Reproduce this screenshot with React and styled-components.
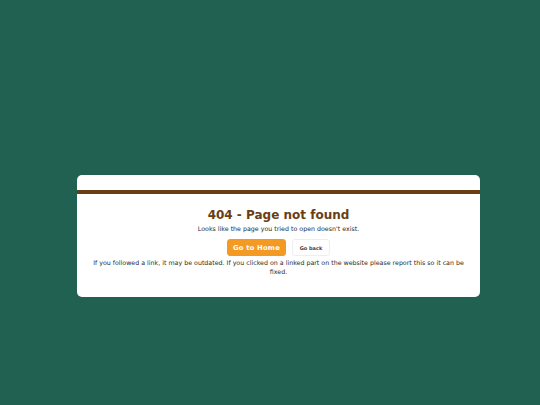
import React from 'react'
import styled, { createGlobalStyle } from 'styled-components'

const GlobalStyle = createGlobalStyle`
  html, body {
    margin: 0;
    padding: 0;
    background: #216152;
    font-family: "DejaVu Sans", Verdana, sans-serif;
  }
`

const Page = styled.div`
  width: 540px;
  height: 405px;
  padding: 175px 60px 0 77px;
  box-sizing: border-box;
`

const Card = styled.div`
  background: #ffffff;
  border-radius: 5px;
  padding: 15px 0 18px;
  height: 122px;
  box-sizing: border-box;
  display: flex;
  flex-direction: column;
  align-items: center;
`

const Bar = styled.div`
  align-self: stretch;
  height: 4px;
  background: #6a3e14;
`

const Title = styled.h1`
  margin: 13px 0 0;
  font-size: 12px;
  line-height: 16px;
  font-weight: bold;
  color: #6a3e14;
`

const Subtitle = styled.p`
  margin: 1px 0 0;
  font-size: 6.3px;
  line-height: 9px;
  color: #2a2a2a;
`

const Actions = styled.div`
  display: flex;
  gap: 6px;
  margin-top: 6px;
`

const Button = styled.button`
  height: 17px;
  border-radius: 3px;
  font-family: inherit;
  font-weight: bold;
  padding: 0;
  cursor: pointer;
  width: ${p => p.$w}px;
  font-size: ${p => (p.$primary ? 6.8 : 5)}px;
  letter-spacing: ${p => (p.$primary ? 0.2 : 0)}px;
  color: ${p => (p.$primary ? '#fff' : '#4a3a2a')};
  background: ${p => (p.$primary ? '#f39a24' : '#fff')};
  border: 1px solid ${p => (p.$primary ? '#f39a24' : '#eee')};
`

const Note = styled.p`
  margin: 3px 0 0;
  padding: 0 12px;
  font-size: 6.3px;
  line-height: 8.5px;
  color: #2a2a2a;
  text-align: center;
`

export default function App() {
  return (
    <Page>
      <GlobalStyle />
      <Card>
        <Bar />
        <Title>404 - Page not found</Title>
        <Subtitle>Looks like the page you tried to open doesn't exist.</Subtitle>
        <Actions>
          <Button $primary $w={59}>Go to Home</Button>
          <Button $w={38}>Go back</Button>
        </Actions>
        <Note>
          If you followed a link, it may be outdated. If you clicked on a linked part on the website please report this so it can be fixed.
        </Note>
      </Card>
    </Page>
  )
}
